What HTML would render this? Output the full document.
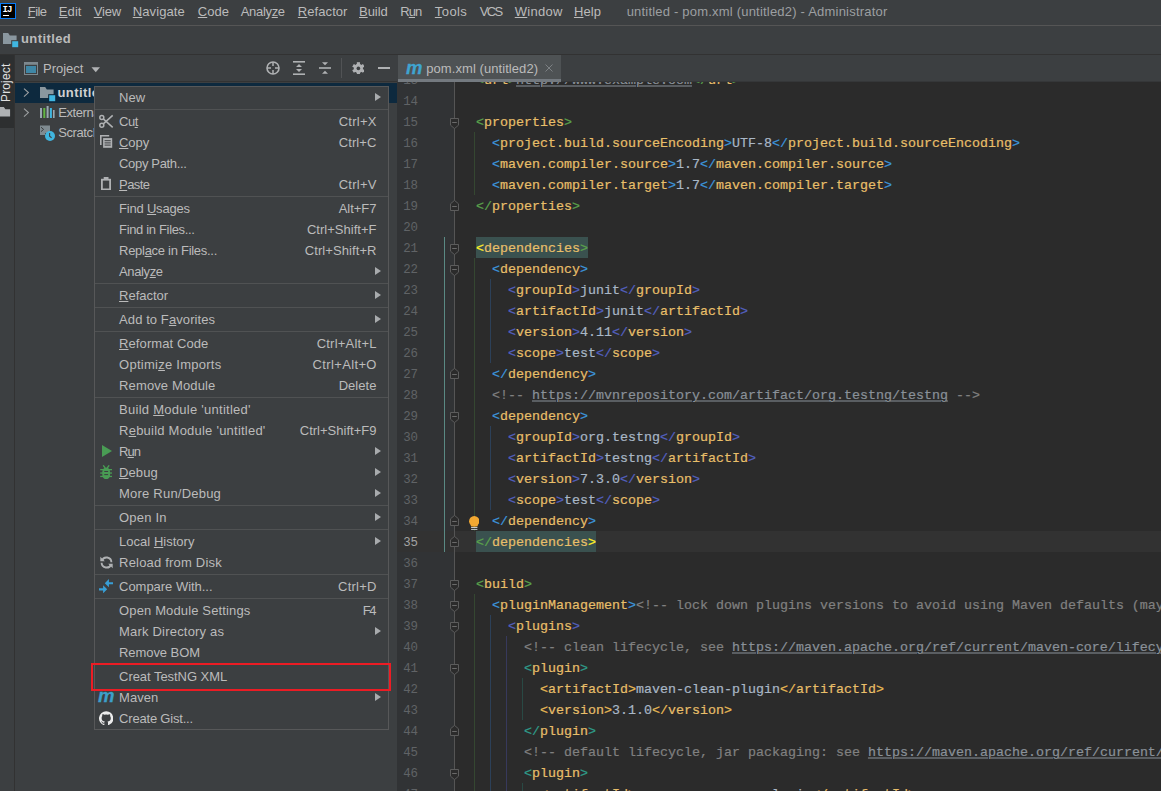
<!DOCTYPE html>
<html lang="en"><head><meta charset="utf-8"><title>untitled - pom.xml (untitled2)</title>
<style>

html,body{margin:0;padding:0;background:#3c3f41;}
body{width:1161px;height:791px;position:relative;overflow:hidden;font:13px "Liberation Sans", sans-serif;color:#bbbbbb;}
div,span,svg{position:absolute;box-sizing:border-box;}
u{text-decoration:underline;text-decoration-thickness:1px;text-underline-offset:1px;}
.t{white-space:pre;line-height:16px;height:16px;margin-top:1px;}
.code{font:13.33px "Liberation Mono", monospace;white-space:pre;line-height:21px;height:21px;left:0;letter-spacing:0;-webkit-text-stroke:0.2px;transform:translateY(0.5px);}
.code span{position:static;}
.ln{font:12.4px "Liberation Mono", monospace;line-height:21px;height:21px;width:22px;text-align:right;color:#606366;letter-spacing:-0.3px;}
.lk{text-decoration:underline;text-decoration-thickness:1px;text-underline-offset:2px;color:#8a9199;}
.sep{left:95px;width:293px;height:1px;background:#505253;}
.fold{left:450px;width:9px;height:11px;}
.ij{left:2.5px;top:6.1px;font:bold 9px "Liberation Mono", monospace;color:#fff;line-height:9px;letter-spacing:-0.9px;}
.mvn{font:italic bold 18.5px "Liberation Sans", sans-serif;line-height:20px;-webkit-text-stroke:0.3px;}

</style></head><body>
<div id="menubar" style="left:0;top:0;width:1161px;height:25px;background:#3c3f41;"></div>
<div style="left:0;top:25px;width:1161px;height:1px;background:#555555;"></div>
<div style="left:0;top:3px;width:16px;height:16px;background:#000;border:1px solid #087cfa;"></div>
<span class="ij">IJ</span>
<div style="left:3px;top:15px;width:6px;height:1px;background:#fff;"></div>
<span class="t " style="left:27.85px;top:3px;letter-spacing:-0.584px;"><u>F</u>ile</span>
<span class="t " style="left:58.85px;top:3px;letter-spacing:0.065px;"><u>E</u>dit</span>
<span class="t " style="left:93.75px;top:3px;letter-spacing:-0.151px;"><u>V</u>iew</span>
<span class="t " style="left:132.75px;top:3px;letter-spacing:0.098px;"><u>N</u>avigate</span>
<span class="t " style="left:197.85px;top:3px;letter-spacing:0.007px;"><u>C</u>ode</span>
<span class="t " style="left:240.75px;top:3px;letter-spacing:-0.325px;">Analy<u>z</u>e</span>
<span class="t " style="left:297.85px;top:3px;letter-spacing:0.066px;"><u>R</u>efactor</span>
<span class="t " style="left:359.05px;top:3px;letter-spacing:-0.055px;"><u>B</u>uild</span>
<span class="t " style="left:400.35px;top:3px;letter-spacing:-0.980px;">R<u>u</u>n</span>
<span class="t " style="left:434.85px;top:3px;letter-spacing:0.410px;"><u>T</u>ools</span>
<span class="t " style="left:479.75px;top:3px;letter-spacing:-1.617px;">VCS</span>
<span class="t " style="left:514.75px;top:3px;letter-spacing:0.290px;"><u>W</u>indow</span>
<span class="t " style="left:573.95px;top:3px;letter-spacing:0.117px;"><u>H</u>elp</span>
<span class="t " style="left:626.65px;top:3px;letter-spacing:0.204px;color:#9c9fa1;">untitled - pom.xml (untitled2) - Administrator</span>
<div style="left:0;top:54px;width:1161px;height:1px;background:#323232;"></div>
<svg style="left:3px;top:33px" width="16" height="15" viewBox="0 0 16 15"><path d="M0 0h5.2l1.6 2.4H13.6V11H0z" fill="#8a979f"/><rect x="8.2" y="7.2" width="7.8" height="7.8" fill="#3c3f41"/><rect x="9.2" y="8.2" width="6" height="6" fill="#40b6e0"/></svg>
<span class="t" style="left:21px;top:30px;font-weight:bold;letter-spacing:0.395px;">untitled</span>
<div style="left:0;top:55px;width:14px;height:736px;background:#3c3f41;"></div>
<div style="left:0;top:55px;width:14px;height:73px;background:#2d2f30;"></div>
<div style="left:14px;top:55px;width:1px;height:736px;background:#323232;"></div>
<span class="t" style="left:-2.5px;top:100.5px;transform-origin:0 0;transform:rotate(-90deg);color:#e0e0e0;font-size:12px;letter-spacing:0.15px;">Project</span>
<svg style="left:0;top:106.7px" width="11" height="10" viewBox="0 0 11 10"><path d="M0 0h3.8l1.6 2.2H10.1V9.4H0z" fill="#aeb1b3"/></svg>
<div style="left:15px;top:81px;width:382px;height:1px;background:#323232;"></div>
<svg style="left:24px;top:62px" width="14" height="13" viewBox="0 0 14 13"><rect x="0.5" y="0.5" width="13" height="12" fill="none" stroke="#7d888e"/><rect x="1" y="1" width="12" height="1.8" fill="#7d888e"/><rect x="2" y="4" width="10" height="7" fill="#3f87a6"/></svg>
<span class="t " style="left:43.05px;top:60px;letter-spacing:-0.011px;">Project</span>
<svg style="left:91px;top:66.8px" width="10" height="6" viewBox="0 0 10 6"><path d="M0.5 0.3h8.5l-4.25 4.9z" fill="#b0b2b4"/></svg>
<svg style="left:266px;top:61px" width="14" height="14" viewBox="0 0 14 14"><circle cx="7" cy="7" r="6" fill="none" stroke="#afb1b3" stroke-width="1.6"/><path d="M7 1v4M7 9v4M1 7h4M9 7h4" stroke="#afb1b3" stroke-width="1.5"/></svg><svg style="left:293px;top:61px" width="12" height="14" viewBox="0 0 12 14"><rect x="0" y="0" width="12" height="1.6" fill="#afb1b3"/><rect x="0" y="12.4" width="12" height="1.6" fill="#afb1b3"/><path d="M3 6l3-3l3 3zM3 8l3 3l3-3z" fill="#afb1b3"/></svg><svg style="left:319px;top:61px" width="12" height="14" viewBox="0 0 12 14"><rect x="0" y="6.2" width="12" height="1.6" fill="#afb1b3"/><path d="M3 1.2l3 3l3-3zM3 12.8l3-3l3 3z" fill="#afb1b3"/></svg><div style="left:341px;top:58px;width:1px;height:20px;background:#515355;"></div><svg style="left:351.6px;top:61.6px" width="12.8" height="12.8" viewBox="-7 -7 14 14"><g fill="#afb1b3"><rect x="-1.7" y="-6.8" width="3.4" height="4" transform="rotate(0)"/><rect x="-1.7" y="-6.8" width="3.4" height="4" transform="rotate(60)"/><rect x="-1.7" y="-6.8" width="3.4" height="4" transform="rotate(120)"/><rect x="-1.7" y="-6.8" width="3.4" height="4" transform="rotate(180)"/><rect x="-1.7" y="-6.8" width="3.4" height="4" transform="rotate(240)"/><rect x="-1.7" y="-6.8" width="3.4" height="4" transform="rotate(300)"/><circle r="5"/></g><circle r="2" fill="#3c3f41"/></svg><div style="left:378px;top:67px;width:12px;height:2px;background:#afb1b3;"></div>
<div style="left:15px;top:83px;width:382px;height:20px;background:#0d293e;"></div>
<svg style="left:23px;top:88px" width="7" height="10" viewBox="0 0 7 10"><path d="M1 0.6l4.4 4l-4.4 4" stroke="#9da0a2" stroke-width="1.1" fill="none"/></svg>
<svg style="left:40px;top:87px" width="16" height="15" viewBox="0 0 16 15"><path d="M0 0h5.2l1.6 2.4H13.6V11H0z" fill="#8a979f"/><rect x="8.2" y="7.2" width="7.8" height="7.8" fill="#0d293e"/><rect x="9.2" y="8.2" width="6" height="6" fill="#40b6e0"/></svg>
<span class="t" style="left:57.5px;top:84px;font-weight:bold;color:#d0d0d0;letter-spacing:0.395px;">untitled</span>
<svg style="left:23px;top:108px" width="7" height="10" viewBox="0 0 7 10"><path d="M1 0.6l4.4 4l-4.4 4" stroke="#9da0a2" stroke-width="1.1" fill="none"/></svg>
<svg style="left:39px;top:105px" width="16" height="14" viewBox="0 0 16 14"><rect x="1" y="3" width="2" height="10" fill="#9aa7b0"/><rect x="4.3" y="3" width="2" height="10" fill="#62b543"/><rect x="7.6" y="1" width="2" height="12" fill="#9aa7b0"/><rect x="10.9" y="3" width="2" height="10" fill="#40b6e0"/><rect x="14" y="5" width="1.6" height="8" fill="#9aa7b0"/></svg>
<span class="t" style="left:58.2px;top:104px;letter-spacing:-0.42px;">External Libraries</span>
<svg style="left:39px;top:125px" width="17" height="17" viewBox="0 0 17 17"><path d="M1 0.5h10v7.5h-5v2H1z" fill="#7f8b91"/><path d="M2 2.2l2.6 2.2l-2.6 2.2" stroke="#3c3f41" stroke-width="1" fill="none"/><circle cx="11" cy="11" r="5" fill="#40b6e0"/><path d="M10.6 8v3.3l2 1.4" stroke="#3c3f41" stroke-width="1.1" fill="none"/></svg>
<span class="t" style="left:58.2px;top:124px;letter-spacing:-0.4px;">Scratches and Consoles</span>
<div style="left:393px;top:83px;width:4px;height:20px;background:#0d293e;"></div>
<div id="tabs" style="left:397px;top:55px;width:764px;height:27px;background:#3c3f41;"></div>
<div style="left:398px;top:55px;width:163px;height:27px;background:#4e5254;"></div>
<div style="left:398px;top:79px;width:163px;height:3px;background:#747a80;"></div>
<div style="left:561px;top:81px;width:600px;height:1px;background:#353739;"></div>
<span class="mvn" style="left:406px;top:57.59px;color:#3fa4d0;">m</span>
<span class="t " style="left:426.25px;top:60px;letter-spacing:0.070px;">pom.xml (untitled2)</span>
<svg style="left:545px;top:64px" width="8" height="8" viewBox="0 0 8 8"><path d="M0.5 0.5l7 7M7.5 0.5l-7 7" stroke="#7d8184" stroke-width="1" fill="none"/></svg>
<div id="editor" style="left:397px;top:82px;width:764px;height:709px;background:#2b2b2b;overflow:hidden;">
<div style="left:0;top:0;width:57px;height:709px;background:#313335;"></div>
<div style="left:0;top:449px;width:764px;height:21px;background:#323232;"></div>
<div style="left:57px;top:0;width:1px;height:709px;background:#555555;"></div>
<div style="left:47px;top:155px;width:1px;height:315px;background:#5a8a84;"></div>
<div style="left:77px;top:50px;width:1px;height:63px;background:#354731;"></div>
<div style="left:77px;top:176px;width:1px;height:273px;background:#354731;"></div>
<div style="left:93px;top:197px;width:1px;height:84px;background:#2c4058;"></div>
<div style="left:93px;top:344px;width:1px;height:84px;background:#2c4058;"></div>
<div style="left:77px;top:512px;width:1px;height:231px;background:#354731;"></div>
<div style="left:93px;top:533px;width:1px;height:210px;background:#2c4058;"></div>
<div style="left:109px;top:554px;width:1px;height:189px;background:#37395c;"></div>
<div style="left:125px;top:596px;width:1px;height:42px;background:#294944;"></div>
<div style="left:125px;top:701px;width:1px;height:42px;background:#294944;"></div>
<span class="ln" style="top:-11.3px;left:-1.3999999999999773px;color:#606366;">13</span>
<span class="code" style="left:79.0px;top:-13px;"><span style="color:#5aa24c">&lt;</span><span style="color:#e8bf6a">url</span><span style="color:#5aa24c">&gt;</span><span class="lk">http://www.example.com</span><span style="color:#5aa24c">&lt;/</span><span style="color:#e8bf6a">url</span><span style="color:#5aa24c">&gt;</span></span>
<span class="ln" style="top:9.7px;left:-1.3999999999999773px;color:#606366;">14</span>
<span class="ln" style="top:30.7px;left:-1.3999999999999773px;color:#606366;">15</span>
<span class="code" style="left:79.0px;top:29px;"><span style="color:#5aa24c">&lt;</span><span style="color:#e8bf6a">properties</span><span style="color:#5aa24c">&gt;</span></span>
<span class="ln" style="top:51.7px;left:-1.3999999999999773px;color:#606366;">16</span>
<span class="code" style="left:95.0px;top:50px;"><span style="color:#3d96dd">&lt;</span><span style="color:#e8bf6a">project.build.sourceEncoding</span><span style="color:#3d96dd">&gt;</span><span style="color:#a9b7c6">UTF-8</span><span style="color:#3d96dd">&lt;/</span><span style="color:#e8bf6a">project.build.sourceEncoding</span><span style="color:#3d96dd">&gt;</span></span>
<span class="ln" style="top:72.7px;left:-1.3999999999999773px;color:#606366;">17</span>
<span class="code" style="left:95.0px;top:71px;"><span style="color:#3d96dd">&lt;</span><span style="color:#e8bf6a">maven.compiler.source</span><span style="color:#3d96dd">&gt;</span><span style="color:#a9b7c6">1.7</span><span style="color:#3d96dd">&lt;/</span><span style="color:#e8bf6a">maven.compiler.source</span><span style="color:#3d96dd">&gt;</span></span>
<span class="ln" style="top:93.7px;left:-1.3999999999999773px;color:#606366;">18</span>
<span class="code" style="left:95.0px;top:92px;"><span style="color:#3d96dd">&lt;</span><span style="color:#e8bf6a">maven.compiler.target</span><span style="color:#3d96dd">&gt;</span><span style="color:#a9b7c6">1.7</span><span style="color:#3d96dd">&lt;/</span><span style="color:#e8bf6a">maven.compiler.target</span><span style="color:#3d96dd">&gt;</span></span>
<span class="ln" style="top:114.7px;left:-1.3999999999999773px;color:#606366;">19</span>
<span class="code" style="left:79.0px;top:113px;"><span style="color:#5aa24c">&lt;/</span><span style="color:#e8bf6a">properties</span><span style="color:#5aa24c">&gt;</span></span>
<span class="ln" style="top:135.7px;left:-1.3999999999999773px;color:#606366;">20</span>
<span class="ln" style="top:156.7px;left:-1.3999999999999773px;color:#606366;">21</span>
<div style="left:79px;top:155px;width:112px;height:21px;background:#3a514f;"></div>
<span class="code" style="left:79.0px;top:155px;"><span style="color:#ffef28">&lt;</span><span style="color:#e8bf6a">dependencies</span><span style="color:#5aa24c">&gt;</span></span>
<span class="ln" style="top:177.7px;left:-1.3999999999999773px;color:#606366;">22</span>
<span class="code" style="left:95.0px;top:176px;"><span style="color:#3d96dd">&lt;</span><span style="color:#e8bf6a">dependency</span><span style="color:#3d96dd">&gt;</span></span>
<span class="ln" style="top:198.7px;left:-1.3999999999999773px;color:#606366;">23</span>
<span class="code" style="left:111.0px;top:197px;"><span style="color:#5461c0">&lt;</span><span style="color:#e8bf6a">groupId</span><span style="color:#5461c0">&gt;</span><span style="color:#a9b7c6">junit</span><span style="color:#5461c0">&lt;/</span><span style="color:#e8bf6a">groupId</span><span style="color:#5461c0">&gt;</span></span>
<span class="ln" style="top:219.7px;left:-1.3999999999999773px;color:#606366;">24</span>
<span class="code" style="left:111.0px;top:218px;"><span style="color:#5461c0">&lt;</span><span style="color:#e8bf6a">artifactId</span><span style="color:#5461c0">&gt;</span><span style="color:#a9b7c6">junit</span><span style="color:#5461c0">&lt;/</span><span style="color:#e8bf6a">artifactId</span><span style="color:#5461c0">&gt;</span></span>
<span class="ln" style="top:240.7px;left:-1.3999999999999773px;color:#606366;">25</span>
<span class="code" style="left:111.0px;top:239px;"><span style="color:#5461c0">&lt;</span><span style="color:#e8bf6a">version</span><span style="color:#5461c0">&gt;</span><span style="color:#a9b7c6">4.11</span><span style="color:#5461c0">&lt;/</span><span style="color:#e8bf6a">version</span><span style="color:#5461c0">&gt;</span></span>
<span class="ln" style="top:261.7px;left:-1.3999999999999773px;color:#606366;">26</span>
<span class="code" style="left:111.0px;top:260px;"><span style="color:#5461c0">&lt;</span><span style="color:#e8bf6a">scope</span><span style="color:#5461c0">&gt;</span><span style="color:#a9b7c6">test</span><span style="color:#5461c0">&lt;/</span><span style="color:#e8bf6a">scope</span><span style="color:#5461c0">&gt;</span></span>
<span class="ln" style="top:282.7px;left:-1.3999999999999773px;color:#606366;">27</span>
<span class="code" style="left:95.0px;top:281px;"><span style="color:#3d96dd">&lt;/</span><span style="color:#e8bf6a">dependency</span><span style="color:#3d96dd">&gt;</span></span>
<span class="ln" style="top:303.7px;left:-1.3999999999999773px;color:#606366;">28</span>
<span class="code" style="left:95.0px;top:302px;"><span style="color:#808080">&lt;!-- </span><span class="lk">https://mvnrepository.com/artifact/org.testng/testng</span><span style="color:#808080"> --&gt;</span></span>
<span class="ln" style="top:324.7px;left:-1.3999999999999773px;color:#606366;">29</span>
<span class="code" style="left:95.0px;top:323px;"><span style="color:#3d96dd">&lt;</span><span style="color:#e8bf6a">dependency</span><span style="color:#3d96dd">&gt;</span></span>
<span class="ln" style="top:345.7px;left:-1.3999999999999773px;color:#606366;">30</span>
<span class="code" style="left:111.0px;top:344px;"><span style="color:#5461c0">&lt;</span><span style="color:#e8bf6a">groupId</span><span style="color:#5461c0">&gt;</span><span style="color:#a9b7c6">org.testng</span><span style="color:#5461c0">&lt;/</span><span style="color:#e8bf6a">groupId</span><span style="color:#5461c0">&gt;</span></span>
<span class="ln" style="top:366.7px;left:-1.3999999999999773px;color:#606366;">31</span>
<span class="code" style="left:111.0px;top:365px;"><span style="color:#5461c0">&lt;</span><span style="color:#e8bf6a">artifactId</span><span style="color:#5461c0">&gt;</span><span style="color:#a9b7c6">testng</span><span style="color:#5461c0">&lt;/</span><span style="color:#e8bf6a">artifactId</span><span style="color:#5461c0">&gt;</span></span>
<span class="ln" style="top:387.7px;left:-1.3999999999999773px;color:#606366;">32</span>
<span class="code" style="left:111.0px;top:386px;"><span style="color:#5461c0">&lt;</span><span style="color:#e8bf6a">version</span><span style="color:#5461c0">&gt;</span><span style="color:#a9b7c6">7.3.0</span><span style="color:#5461c0">&lt;/</span><span style="color:#e8bf6a">version</span><span style="color:#5461c0">&gt;</span></span>
<span class="ln" style="top:408.7px;left:-1.3999999999999773px;color:#606366;">33</span>
<span class="code" style="left:111.0px;top:407px;"><span style="color:#5461c0">&lt;</span><span style="color:#e8bf6a">scope</span><span style="color:#5461c0">&gt;</span><span style="color:#a9b7c6">test</span><span style="color:#5461c0">&lt;/</span><span style="color:#e8bf6a">scope</span><span style="color:#5461c0">&gt;</span></span>
<span class="ln" style="top:429.7px;left:-1.3999999999999773px;color:#606366;">34</span>
<span class="code" style="left:95.0px;top:428px;"><span style="color:#3d96dd">&lt;/</span><span style="color:#e8bf6a">dependency</span><span style="color:#3d96dd">&gt;</span></span>
<span class="ln" style="top:450.7px;left:-1.3999999999999773px;color:#a4a3a3;">35</span>
<div style="left:79px;top:449px;width:120px;height:21px;background:#3a514f;"></div>
<span class="code" style="left:79.0px;top:449px;"><span style="color:#5aa24c">&lt;/</span><span style="color:#e8bf6a">dependencies</span><span style="color:#ffef28">&gt;</span></span>
<span class="ln" style="top:471.7px;left:-1.3999999999999773px;color:#606366;">36</span>
<span class="ln" style="top:492.7px;left:-1.3999999999999773px;color:#606366;">37</span>
<span class="code" style="left:79.0px;top:491px;"><span style="color:#5aa24c">&lt;</span><span style="color:#e8bf6a">build</span><span style="color:#5aa24c">&gt;</span></span>
<span class="ln" style="top:513.7px;left:-1.3999999999999773px;color:#606366;">38</span>
<span class="code" style="left:95.0px;top:512px;"><span style="color:#3d96dd">&lt;</span><span style="color:#e8bf6a">pluginManagement</span><span style="color:#3d96dd">&gt;</span><span style="color:#808080">&lt;!-- lock down plugins versions to avoid using Maven defaults (may be moved to parent pom) --&gt;</span></span>
<span class="ln" style="top:534.7px;left:-1.3999999999999773px;color:#606366;">39</span>
<span class="code" style="left:111.0px;top:533px;"><span style="color:#5461c0">&lt;</span><span style="color:#e8bf6a">plugins</span><span style="color:#5461c0">&gt;</span></span>
<span class="ln" style="top:555.7px;left:-1.3999999999999773px;color:#606366;">40</span>
<span class="code" style="left:127.0px;top:554px;"><span style="color:#808080">&lt;!-- clean lifecycle, see </span><span class="lk">https://maven.apache.org/ref/current/maven-core/lifecycles.html#clean_Lifecycle</span><span style="color:#808080"> --&gt;</span></span>
<span class="ln" style="top:576.7px;left:-1.3999999999999773px;color:#606366;">41</span>
<span class="code" style="left:127.0px;top:575px;"><span style="color:#2f9c8a">&lt;</span><span style="color:#e8bf6a">plugin</span><span style="color:#2f9c8a">&gt;</span></span>
<span class="ln" style="top:597.7px;left:-1.3999999999999773px;color:#606366;">42</span>
<span class="code" style="left:143.0px;top:596px;"><span style="color:#e8ba55">&lt;</span><span style="color:#e8bf6a">artifactId</span><span style="color:#e8ba55">&gt;</span><span style="color:#a9b7c6">maven-clean-plugin</span><span style="color:#e8ba55">&lt;/</span><span style="color:#e8bf6a">artifactId</span><span style="color:#e8ba55">&gt;</span></span>
<span class="ln" style="top:618.7px;left:-1.3999999999999773px;color:#606366;">43</span>
<span class="code" style="left:143.0px;top:617px;"><span style="color:#e8ba55">&lt;</span><span style="color:#e8bf6a">version</span><span style="color:#e8ba55">&gt;</span><span style="color:#a9b7c6">3.1.0</span><span style="color:#e8ba55">&lt;/</span><span style="color:#e8bf6a">version</span><span style="color:#e8ba55">&gt;</span></span>
<span class="ln" style="top:639.7px;left:-1.3999999999999773px;color:#606366;">44</span>
<span class="code" style="left:127.0px;top:638px;"><span style="color:#2f9c8a">&lt;/</span><span style="color:#e8bf6a">plugin</span><span style="color:#2f9c8a">&gt;</span></span>
<span class="ln" style="top:660.7px;left:-1.3999999999999773px;color:#606366;">45</span>
<span class="code" style="left:127.0px;top:659px;"><span style="color:#808080">&lt;!-- default lifecycle, jar packaging: see </span><span class="lk">https://maven.apache.org/ref/current/maven-core/default-bindings.html#Plugin_bindings_for_jar_packaging</span><span style="color:#808080"> --&gt;</span></span>
<span class="ln" style="top:681.7px;left:-1.3999999999999773px;color:#606366;">46</span>
<span class="code" style="left:127.0px;top:680px;"><span style="color:#2f9c8a">&lt;</span><span style="color:#e8bf6a">plugin</span><span style="color:#2f9c8a">&gt;</span></span>
<span class="ln" style="top:702.7px;left:-1.3999999999999773px;color:#606366;">47</span>
<span class="code" style="left:143.0px;top:701px;"><span style="color:#e8ba55">&lt;</span><span style="color:#e8bf6a">artifactId</span><span style="color:#e8ba55">&gt;</span><span style="color:#a9b7c6">maven-resources-plugin</span><span style="color:#e8ba55">&lt;/</span><span style="color:#e8bf6a">artifactId</span><span style="color:#e8ba55">&gt;</span></span>
<svg class="fold" style="left:53px;top:36px" width="9" height="11" viewBox="0 0 9 11"><path d="M0.5 0.5h8v6.7l-4 3.4l-4-3.4z" fill="#2b2b2b" stroke="#5c5c5c"/><path d="M2.2 4.5h4.6" stroke="#6a6a6a"/></svg>
<svg class="fold" style="left:53px;top:162px" width="9" height="11" viewBox="0 0 9 11"><path d="M0.5 0.5h8v6.7l-4 3.4l-4-3.4z" fill="#2b2b2b" stroke="#5c5c5c"/><path d="M2.2 4.5h4.6" stroke="#6a6a6a"/></svg>
<svg class="fold" style="left:53px;top:183px" width="9" height="11" viewBox="0 0 9 11"><path d="M0.5 0.5h8v6.7l-4 3.4l-4-3.4z" fill="#2b2b2b" stroke="#5c5c5c"/><path d="M2.2 4.5h4.6" stroke="#6a6a6a"/></svg>
<svg class="fold" style="left:53px;top:330px" width="9" height="11" viewBox="0 0 9 11"><path d="M0.5 0.5h8v6.7l-4 3.4l-4-3.4z" fill="#2b2b2b" stroke="#5c5c5c"/><path d="M2.2 4.5h4.6" stroke="#6a6a6a"/></svg>
<svg class="fold" style="left:53px;top:498px" width="9" height="11" viewBox="0 0 9 11"><path d="M0.5 0.5h8v6.7l-4 3.4l-4-3.4z" fill="#2b2b2b" stroke="#5c5c5c"/><path d="M2.2 4.5h4.6" stroke="#6a6a6a"/></svg>
<svg class="fold" style="left:53px;top:519px" width="9" height="11" viewBox="0 0 9 11"><path d="M0.5 0.5h8v6.7l-4 3.4l-4-3.4z" fill="#2b2b2b" stroke="#5c5c5c"/><path d="M2.2 4.5h4.6" stroke="#6a6a6a"/></svg>
<svg class="fold" style="left:53px;top:540px" width="9" height="11" viewBox="0 0 9 11"><path d="M0.5 0.5h8v6.7l-4 3.4l-4-3.4z" fill="#2b2b2b" stroke="#5c5c5c"/><path d="M2.2 4.5h4.6" stroke="#6a6a6a"/></svg>
<svg class="fold" style="left:53px;top:582px" width="9" height="11" viewBox="0 0 9 11"><path d="M0.5 0.5h8v6.7l-4 3.4l-4-3.4z" fill="#2b2b2b" stroke="#5c5c5c"/><path d="M2.2 4.5h4.6" stroke="#6a6a6a"/></svg>
<svg class="fold" style="left:53px;top:687px" width="9" height="11" viewBox="0 0 9 11"><path d="M0.5 0.5h8v6.7l-4 3.4l-4-3.4z" fill="#2b2b2b" stroke="#5c5c5c"/><path d="M2.2 4.5h4.6" stroke="#6a6a6a"/></svg>
<svg class="fold" style="left:53px;top:118px" width="9" height="11" viewBox="0 0 9 11"><path d="M0.5 10.5h8v-6.7l-4-3.4l-4 3.4z" fill="#2b2b2b" stroke="#5c5c5c"/><path d="M2.2 6.5h4.6" stroke="#6a6a6a"/></svg>
<svg class="fold" style="left:53px;top:286px" width="9" height="11" viewBox="0 0 9 11"><path d="M0.5 10.5h8v-6.7l-4-3.4l-4 3.4z" fill="#2b2b2b" stroke="#5c5c5c"/><path d="M2.2 6.5h4.6" stroke="#6a6a6a"/></svg>
<svg class="fold" style="left:53px;top:433px" width="9" height="11" viewBox="0 0 9 11"><path d="M0.5 10.5h8v-6.7l-4-3.4l-4 3.4z" fill="#2b2b2b" stroke="#5c5c5c"/><path d="M2.2 6.5h4.6" stroke="#6a6a6a"/></svg>
<svg class="fold" style="left:53px;top:454px" width="9" height="11" viewBox="0 0 9 11"><path d="M0.5 10.5h8v-6.7l-4-3.4l-4 3.4z" fill="#2b2b2b" stroke="#5c5c5c"/><path d="M2.2 6.5h4.6" stroke="#6a6a6a"/></svg>
<svg class="fold" style="left:53px;top:643px" width="9" height="11" viewBox="0 0 9 11"><path d="M0.5 10.5h8v-6.7l-4-3.4l-4 3.4z" fill="#2b2b2b" stroke="#5c5c5c"/><path d="M2.2 6.5h4.6" stroke="#6a6a6a"/></svg>
<svg style="left:71.80000000000001px;top:433.8px" width="10.5" height="14.6" viewBox="0 0 10.5 14.6"><circle cx="5.25" cy="5.2" r="5.2" fill="#f2a832"/><path d="M1.5 8.4H9L8.4 10.5H2.1z" fill="#f2a832"/><rect x="2.1" y="11.1" width="6.3" height="1" fill="#d9dbdc"/><rect x="2.1" y="13.2" width="6.3" height="1" fill="#d9dbdc"/></svg>
</div>
<div id="ctx" style="left:94px;top:86px;width:295px;height:644px;background:#3c3f41;border:1px solid #575859;"></div>
<span class="t " style="left:119.05px;top:89px;letter-spacing:0.092px;">New</span>
<svg style="left:375px;top:93px" width="6" height="8" viewBox="0 0 6 8"><path d="M0 0l6 4l-6 4z" fill="#a8abad"/></svg>
<div class="sep" style="top:109px;"></div>
<span class="t " style="left:119.05px;top:113px;letter-spacing:-0.517px;">Cu<u>t</u></span>
<span class="t " style="left:338.65px;top:113px;letter-spacing:0.263px;">Ctrl+X</span>
<svg style="left:99px;top:114px" width="15" height="15" viewBox="0 0 15 15"><g fill="none" stroke="#afb1b3" stroke-width="1.5"><circle cx="2.8" cy="3.6" r="2"/><circle cx="2.8" cy="11.2" r="2"/><path d="M4.3 4.9L13.7 13.4M4.3 9.9L13.7 1.4"/></g></svg>
<span class="t " style="left:119.05px;top:134px;letter-spacing:-0.086px;"><u>C</u>opy</span>
<span class="t " style="left:338.65px;top:134px;letter-spacing:0.119px;">Ctrl+C</span>
<svg style="left:100px;top:135px" width="13" height="13" viewBox="0 0 13 13"><path d="M0.8 10V0.8H9.2" fill="none" stroke="#afb1b3" stroke-width="1.6"/><rect x="3.1" y="3.1" width="9.1" height="9.7" fill="#afb1b3"/><path d="M4.6 5.7h6.1M4.6 7.9h6.1M4.6 10.1h6.1" stroke="#3c3f41" stroke-width="1"/></svg>
<span class="t " style="left:119.05px;top:155px;letter-spacing:-0.332px;">Copy Path...</span>
<span class="t " style="left:119.05px;top:176px;letter-spacing:-0.588px;"><u>P</u>aste</span>
<span class="t " style="left:338.65px;top:176px;letter-spacing:0.263px;">Ctrl+V</span>
<svg style="left:101px;top:176.75px" width="10" height="13.5" viewBox="0 0 10 13.5"><rect x="0.9" y="2.7" width="8.2" height="9.7" fill="none" stroke="#afb1b3" stroke-width="1.8"/><rect x="2.7" y="0" width="4.8" height="2.6" fill="#afb1b3"/></svg>
<div class="sep" style="top:196px;"></div>
<span class="t " style="left:119.05px;top:200px;letter-spacing:-0.208px;">Find <u>U</u>sages</span>
<span class="t " style="left:338.65px;top:200px;letter-spacing:-0.028px;">Alt+F7</span>
<span class="t " style="left:119.05px;top:221px;letter-spacing:-0.335px;">Find in Files...</span>
<span class="t " style="left:306.95px;top:221px;letter-spacing:0.013px;">Ctrl+Shift+F</span>
<span class="t " style="left:119.05px;top:242px;letter-spacing:-0.285px;">Repl<u>a</u>ce in Files...</span>
<span class="t " style="left:304.75px;top:242px;letter-spacing:0.081px;">Ctrl+Shift+R</span>
<span class="t " style="left:119.05px;top:263px;letter-spacing:-0.375px;">Analy<u>z</u>e</span>
<svg style="left:375px;top:267px" width="6" height="8" viewBox="0 0 6 8"><path d="M0 0l6 4l-6 4z" fill="#a8abad"/></svg>
<div class="sep" style="top:283px;"></div>
<span class="t " style="left:119.05px;top:287px;letter-spacing:-0.020px;"><u>R</u>efactor</span>
<svg style="left:375px;top:291px" width="6" height="8" viewBox="0 0 6 8"><path d="M0 0l6 4l-6 4z" fill="#a8abad"/></svg>
<div class="sep" style="top:307px;"></div>
<span class="t " style="left:119.05px;top:311px;letter-spacing:0.090px;">Add to F<u>a</u>vorites</span>
<svg style="left:375px;top:315px" width="6" height="8" viewBox="0 0 6 8"><path d="M0 0l6 4l-6 4z" fill="#a8abad"/></svg>
<div class="sep" style="top:331px;"></div>
<span class="t " style="left:119.05px;top:335px;letter-spacing:0.095px;"><u>R</u>eformat Code</span>
<span class="t " style="left:316.65px;top:335px;letter-spacing:0.221px;">Ctrl+Alt+L</span>
<span class="t " style="left:119.05px;top:356px;letter-spacing:0.257px;">Optimi<u>z</u>e Imports</span>
<span class="t " style="left:312.55px;top:356px;letter-spacing:0.357px;">Ctrl+Alt+O</span>
<span class="t " style="left:119.05px;top:377px;letter-spacing:0.129px;">Remove Module</span>
<span class="t " style="left:338.65px;top:377px;letter-spacing:0.044px;">Delete</span>
<div class="sep" style="top:397px;"></div>
<span class="t " style="left:119.05px;top:401px;letter-spacing:0.266px;">Build <u>M</u>odule 'untitled'</span>
<span class="t " style="left:119.05px;top:422px;letter-spacing:0.227px;">R<u>e</u>build Module 'untitled'</span>
<span class="t " style="left:299.75px;top:422px;letter-spacing:0.009px;">Ctrl+Shift+F9</span>
<span class="t " style="left:119.05px;top:443px;letter-spacing:-0.930px;">R<u>u</u>n</span>
<svg style="left:375px;top:447px" width="6" height="8" viewBox="0 0 6 8"><path d="M0 0l6 4l-6 4z" fill="#a8abad"/></svg>
<svg style="left:102px;top:445px" width="10" height="12" viewBox="0 0 10 12"><path d="M0 0l10 6l-10 6z" fill="#499c54"/></svg>
<span class="t " style="left:119.05px;top:464px;letter-spacing:0.097px;"><u>D</u>ebug</span>
<svg style="left:375px;top:468px" width="6" height="8" viewBox="0 0 6 8"><path d="M0 0l6 4l-6 4z" fill="#a8abad"/></svg>
<svg style="left:100px;top:465px" width="12.4" height="14.4" viewBox="0 0 12.4 14.4"><g fill="#499c54"><rect x="2.3" y="2.5" width="7.8" height="11.8" rx="3.9" ry="4.4"/><rect x="0.2" y="4" width="12" height="1.3"/><rect x="0.2" y="7.4" width="12" height="1.3"/><rect x="0.2" y="10.8" width="12" height="1.3"/></g><path d="M3.2 0.3L5.2 3M9.2 0.3L7.2 3" stroke="#499c54" stroke-width="1.3" fill="none"/><path d="M4.3 6.5h3.8M4.3 9.6h3.8" stroke="#3c3f41" stroke-width="1"/></svg>
<span class="t " style="left:119.05px;top:485px;letter-spacing:0.215px;">More Run/Debug</span>
<svg style="left:375px;top:489px" width="6" height="8" viewBox="0 0 6 8"><path d="M0 0l6 4l-6 4z" fill="#a8abad"/></svg>
<div class="sep" style="top:505px;"></div>
<span class="t " style="left:119.05px;top:509px;letter-spacing:0.206px;">Open In</span>
<svg style="left:375px;top:513px" width="6" height="8" viewBox="0 0 6 8"><path d="M0 0l6 4l-6 4z" fill="#a8abad"/></svg>
<div class="sep" style="top:529px;"></div>
<span class="t " style="left:119.05px;top:533px;letter-spacing:0.022px;">Local <u>H</u>istory</span>
<svg style="left:375px;top:537px" width="6" height="8" viewBox="0 0 6 8"><path d="M0 0l6 4l-6 4z" fill="#a8abad"/></svg>
<span class="t " style="left:119.05px;top:554px;letter-spacing:0.200px;">Reload from Disk</span>
<svg style="left:99.6px;top:555.6px" width="13" height="13" viewBox="0 0 13 13"><g fill="none" stroke="#afb1b3" stroke-width="1.9"><path d="M1.9 4.7A4.9 4.9 0 0 1 11.4 6.2"/><path d="M11.1 8.3A4.9 4.9 0 0 1 1.6 6.8"/></g><path d="M0.3 0.8V5.3H4.8z" fill="#afb1b3"/><path d="M12.7 12.2V7.7H8.2z" fill="#afb1b3"/></svg>
<div class="sep" style="top:574px;"></div>
<span class="t " style="left:119.05px;top:578px;letter-spacing:-0.030px;">Compare With...</span>
<span class="t " style="left:338.05px;top:578px;letter-spacing:0.239px;">Ctrl+D</span>
<svg style="left:98.9px;top:578.75px" width="14.2" height="14.3" viewBox="0 0 14.2 14.3"><g fill="#389fd6"><path d="M5.8 4.15L9.95 0v3.15h4.15v2.2H9.95v2.9z"/><path d="M8.2 10.3L4.1 6.25v2.9H0v2.25h4.1v2.9z"/></g></svg>
<div class="sep" style="top:598px;"></div>
<span class="t " style="left:119.05px;top:602px;letter-spacing:0.135px;">Open Module Settings</span>
<span class="t " style="left:362.75px;top:602px;letter-spacing:-1.472px;">F4</span>
<span class="t " style="left:119.05px;top:623px;letter-spacing:0.196px;">Mark Directory as</span>
<svg style="left:375px;top:627px" width="6" height="8" viewBox="0 0 6 8"><path d="M0 0l6 4l-6 4z" fill="#a8abad"/></svg>
<span class="t " style="left:119.05px;top:644px;letter-spacing:-0.071px;">Remove BOM</span>
<div class="sep" style="top:664px;"></div>
<span class="t " style="left:119.05px;top:668px;letter-spacing:-0.044px;">Creat TestNG XML</span>
<span class="t " style="left:119.05px;top:689px;letter-spacing:0.067px;">Maven</span>
<svg style="left:375px;top:693px" width="6" height="8" viewBox="0 0 6 8"><path d="M0 0l6 4l-6 4z" fill="#a8abad"/></svg>
<span class="mvn" style="left:98.1px;top:685.69px;color:#3d9fc9;">m</span>
<span class="t " style="left:119.05px;top:710px;letter-spacing:-0.191px;">Create Gist...</span>
<svg style="left:99px;top:710.7px" width="14.4" height="14.4" viewBox="0 0 16 16"><path fill="#ececec" d="M8 0.200a8 8 0 0 0-2.500 15.600c.400.100.500-.200.500-.400v-1.400c-2.200.500-2.700-1-2.700-1-.400-.900-.900-1.200-.900-1.200-.700-.500.100-.500.100-.500.800.100 1.200.800 1.200.800.700 1.200 1.900.900 2.300.700.100-.500.300-.900.500-1.100-1.800-.200-3.600-.900-3.600-4 0-.900.300-1.600.800-2.100-.100-.200-.400-1 .100-2.100 0 0 .700-.200 2.200.800a7.500 7.500 0 0 1 4 0c1.500-1 2.200-.800 2.200-.800.400 1.100.200 1.900.100 2.100.5.600.8 1.300.8 2.100 0 3.100-1.900 3.700-3.700 3.900.3.300.6.800.6 1.500v2.200c0 .200.100.500.600.400A8 8 0 0 0 8 .200z"/></svg>
<div style="left:91px;top:663px;width:300px;height:28px;border:2px solid #ec1c24;"></div>
</body></html>
